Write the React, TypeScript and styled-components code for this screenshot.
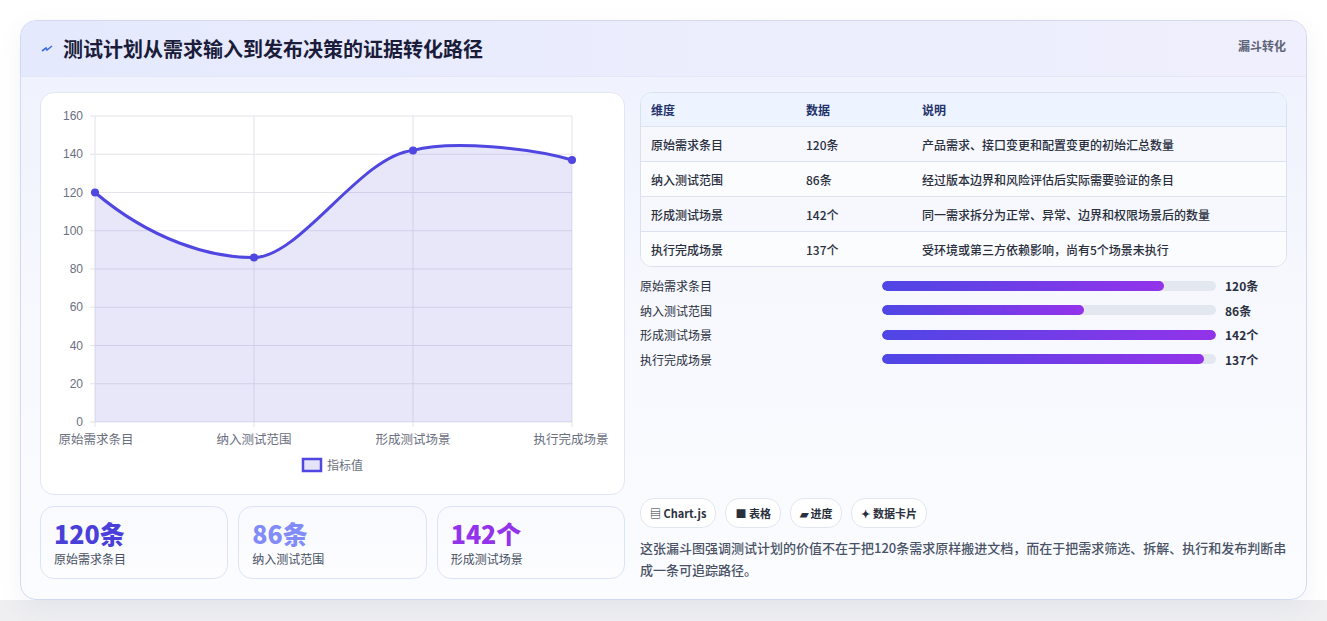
import React from 'react';
import styled, { createGlobalStyle } from 'styled-components';

const Global = createGlobalStyle`
  html, body { margin: 0; padding: 0; background: #f3f3f5; }
  body { font-family: "Noto Sans CJK SC", "Noto Sans", sans-serif; }
`;

const Page = styled.div`
  width: 1327px;
  height: 621px;
  padding: 20px 20px 0 20px;
  box-sizing: border-box;
  background: linear-gradient(#ffffff 0, #ffffff 600px, #efeff1 600px);
`;

const Card = styled.div`
  width: 1287px;
  height: 580px;
  box-sizing: border-box;
  border: 1px solid #d4d9f2;
  border-radius: 16px;
  background: linear-gradient(180deg, #eef0fd 0%, #f6f8fe 45%, #fbfcff 100%);
  box-shadow: 0 8px 24px rgba(90, 100, 160, 0.08);
  overflow: hidden;
  display: flex;
  flex-direction: column;
`;

const Header = styled.div`
  height: 55px;
  display: flex;
  align-items: center;
  justify-content: space-between;
  padding: 0 20px;
  background: linear-gradient(90deg, #e5e9fd, #eceefd 60%, #efeffd);
  border-bottom: 1px solid #e3e7f8;
`;

const Title = styled.h1`
  margin: 0;
  font-size: 20px;
  font-weight: 700;
  color: #1a1c3a;
  display: flex;
  align-items: center;
  gap: 10px;
`;

const Tag = styled.span`
  font-size: 12px;
  font-weight: 700;
  color: #5e6478;
  align-self: flex-start;
  margin-top: 16px;
`;

const Body = styled.div`
  flex: 1;
  display: grid;
  grid-template-columns: 585px 647px;
  gap: 15px;
  padding: 15px 19px 18px 19px;
`;

const Col = styled.div`
  display: flex;
  flex-direction: column;
`;

const ChartCard = styled.div`
  height: 403px;
  background: #fff;
  border: 1px solid #e1e6f3;
  border-radius: 14px;
  box-sizing: border-box;
  overflow: hidden;
`;

const Stats = styled.div`
  margin-top: 11px;
  display: grid;
  grid-template-columns: repeat(3, 1fr);
  gap: 10px;
`;

const Stat = styled.div`
  height: 73px;
  box-sizing: border-box;
  border: 1px solid #dbe4f6;
  border-radius: 14px;
  background: linear-gradient(180deg, #f8faff, #fdfdff);
  padding: 10px 13px;
`;

const StatValue = styled.div<{ $color: string }>`
  font-size: 25px;
  font-weight: 800;
  line-height: 32px;
  color: ${(p) => p.$color};
`;

const StatLabel = styled.div`
  font-size: 12px;
  color: #475062;
  margin-top: 1px;
`;

const Table = styled.div`
  border: 1px solid #d9e1ef;
  border-radius: 12px;
  overflow: hidden;
  background: #fff;
  font-size: 12px;
`;

const Row = styled.div<{ $head?: boolean; $alt?: boolean }>`
  display: grid;
  grid-template-columns: 155px 116px 1fr;
  box-sizing: border-box;
  height: ${(p) => (p.$head ? 33 : 35)}px;
  align-items: center;
  padding: 0 10px;
  background: ${(p) => (p.$head ? '#eef4ff' : p.$alt ? '#fbfcfe' : '#f6f8fd')};
  border-top: ${(p) => (p.$head ? 'none' : '1px solid #dde3ee')};
  color: ${(p) => (p.$head ? '#23336b' : '#2a2f3d')};
  font-weight: ${(p) => (p.$head ? 700 : 500)};
`;

const Bars = styled.div`
  margin-top: 10px;
  display: flex;
  flex-direction: column;
  gap: 8px;
`;

const BarRow = styled.div`
  display: grid;
  grid-template-columns: 242px 334px 1fr;
  align-items: center;
  height: 16.5px;
  font-size: 12px;
  color: #2a2f3d;
`;

const Track = styled.div`
  height: 10px;
  border-radius: 5px;
  background: #e3e8f0;
  overflow: hidden;
`;

const Fill = styled.div`
  height: 100%;
  border-radius: 5px;
  background: linear-gradient(90deg, #4f46e5, #9333ea);
`;

const BarValue = styled.span`
  padding-left: 9px;
  font-weight: 700;
`;

const Chips = styled.div`
  margin-top: auto;
  display: flex;
  gap: 9px;
`;

const Chip = styled.span`
  height: 28px;
  padding: 0 9px;
  display: inline-flex;
  align-items: center;
  gap: 3px;
  border: 1px solid #e2e6ef;
  border-radius: 14px;
  background: #fff;
  font-size: 11px;
  font-weight: 600;
  color: #2a2f3d;
`;

const Note = styled.p`
  margin: 9px 0 0 0;
  font-size: 13px;
  line-height: 22px;
  color: #4a5366;
  font-weight: 500;
`;

const rows = [
  ['原始需求条目', '120条', '产品需求、接口变更和配置变更的初始汇总数量'],
  ['纳入测试范围', '86条', '经过版本边界和风险评估后实际需要验证的条目'],
  ['形成测试场景', '142个', '同一需求拆分为正常、异常、边界和权限场景后的数量'],
  ['执行完成场景', '137个', '受环境或第三方依赖影响，尚有5个场景未执行'],
];
const values = [120, 86, 142, 137];

const Chart = () => {
  const x0 = 54, x1 = 531, y0 = 329, h = 306;
  const xs = [0, 1, 2, 3].map((i) => x0 + (i * (x1 - x0)) / 3);
  const y = (v: number) => y0 - (v / 160) * h;
  const line = `M${xs[0]},${y(120)} C110,147 170,165 ${xs[1]},${y(86)} C260,164 320,62 ${xs[2]},${y(142)} C410,47 490,55 ${xs[3]},${y(137)}`;
  const area = `${line} L${xs[3]},${y0} L${xs[0]},${y0} Z`;
  return (
    <svg width="585" height="403" viewBox="0 0 585 403" fontFamily="Liberation Sans, Noto Sans CJK SC, sans-serif">
      {[0, 20, 40, 60, 80, 100, 120, 140, 160].map((v) => (
        <g key={v}>
          <line x1={x0 - 5} x2={x1} y1={y(v)} y2={y(v)} stroke="#e3e3ea" />
          <text x={x0 - 12} y={y(v) + 4} fontSize="12" fill="#6b7080" textAnchor="end">{v}</text>
        </g>
      ))}
      {xs.map((x, i) => (
        <line key={i} x1={x} x2={x} y1={y(160)} y2={y0 + 5} stroke="#e3e3ea" />
      ))}
      <path d={area} fill="rgba(99,91,220,0.15)" />
      <path d={line} fill="none" stroke="#5046e0" strokeWidth="3" />
      {values.map((v, i) => (
        <circle key={i} cx={xs[i]} cy={y(v)} r="4" fill="#5046e0" />
      ))}
      {['原始需求条目', '纳入测试范围', '形成测试场景', '执行完成场景'].map((t, i) => (
        <text key={t} x={Math.min(Math.max(xs[i], 55), 530)} y={y0 + 22} fontSize="12.5" fill="#6b7080" textAnchor="middle">{t}</text>
      ))}
      <rect x="262" y="366" width="18" height="12" fill="#e4e3f8" stroke="#5046e0" strokeWidth="2.5" />
      <text x="286" y="377" fontSize="12" fill="#6b7080">指标值</text>
    </svg>
  );
};

export default function App() {
  return (
    <>
      <Global />
      <Page>
        <Card>
          <Header>
            <Title>
              <svg width="12" height="10" viewBox="0 0 12 10">
                <path d="M1 7 L5 4 L6 6 L11 2" fill="none" stroke="#3b6fe0" strokeWidth="1.6" />
              </svg>
              测试计划从需求输入到发布决策的证据转化路径
            </Title>
            <Tag>漏斗转化</Tag>
          </Header>
          <Body>
            <Col>
              <ChartCard>
                <Chart />
              </ChartCard>
              <Stats>
                <Stat>
                  <StatValue $color="#4a3fd8">120条</StatValue>
                  <StatLabel>原始需求条目</StatLabel>
                </Stat>
                <Stat>
                  <StatValue $color="#818cf8">86条</StatValue>
                  <StatLabel>纳入测试范围</StatLabel>
                </Stat>
                <Stat>
                  <StatValue $color="#9333ea">142个</StatValue>
                  <StatLabel>形成测试场景</StatLabel>
                </Stat>
              </Stats>
            </Col>
            <Col>
              <Table>
                <Row $head>
                  <span>维度</span>
                  <span>数据</span>
                  <span>说明</span>
                </Row>
                {rows.map((r, i) => (
                  <Row key={r[0]} $alt={i % 2 === 1}>
                    <span>{r[0]}</span>
                    <span>{r[1]}</span>
                    <span>{r[2]}</span>
                  </Row>
                ))}
              </Table>
              <Bars>
                {rows.map((r, i) => (
                  <BarRow key={r[0]}>
                    <span>{r[0]}</span>
                    <Track>
                      <Fill style={{ width: `${(values[i] / 142) * 100}%` }} />
                    </Track>
                    <BarValue>{r[1]}</BarValue>
                  </BarRow>
                ))}
              </Bars>
              <Chips>
                <Chip>▤ Chart.js</Chip>
                <Chip>■ 表格</Chip>
                <Chip>▰ 进度</Chip>
                <Chip>✦ 数据卡片</Chip>
              </Chips>
              <Note>
                这张漏斗图强调测试计划的价值不在于把120条需求原样搬进文档，而在于把需求筛选、拆解、执行和发布判断串成一条可追踪路径。
              </Note>
            </Col>
          </Body>
        </Card>
      </Page>
    </>
  );
}
